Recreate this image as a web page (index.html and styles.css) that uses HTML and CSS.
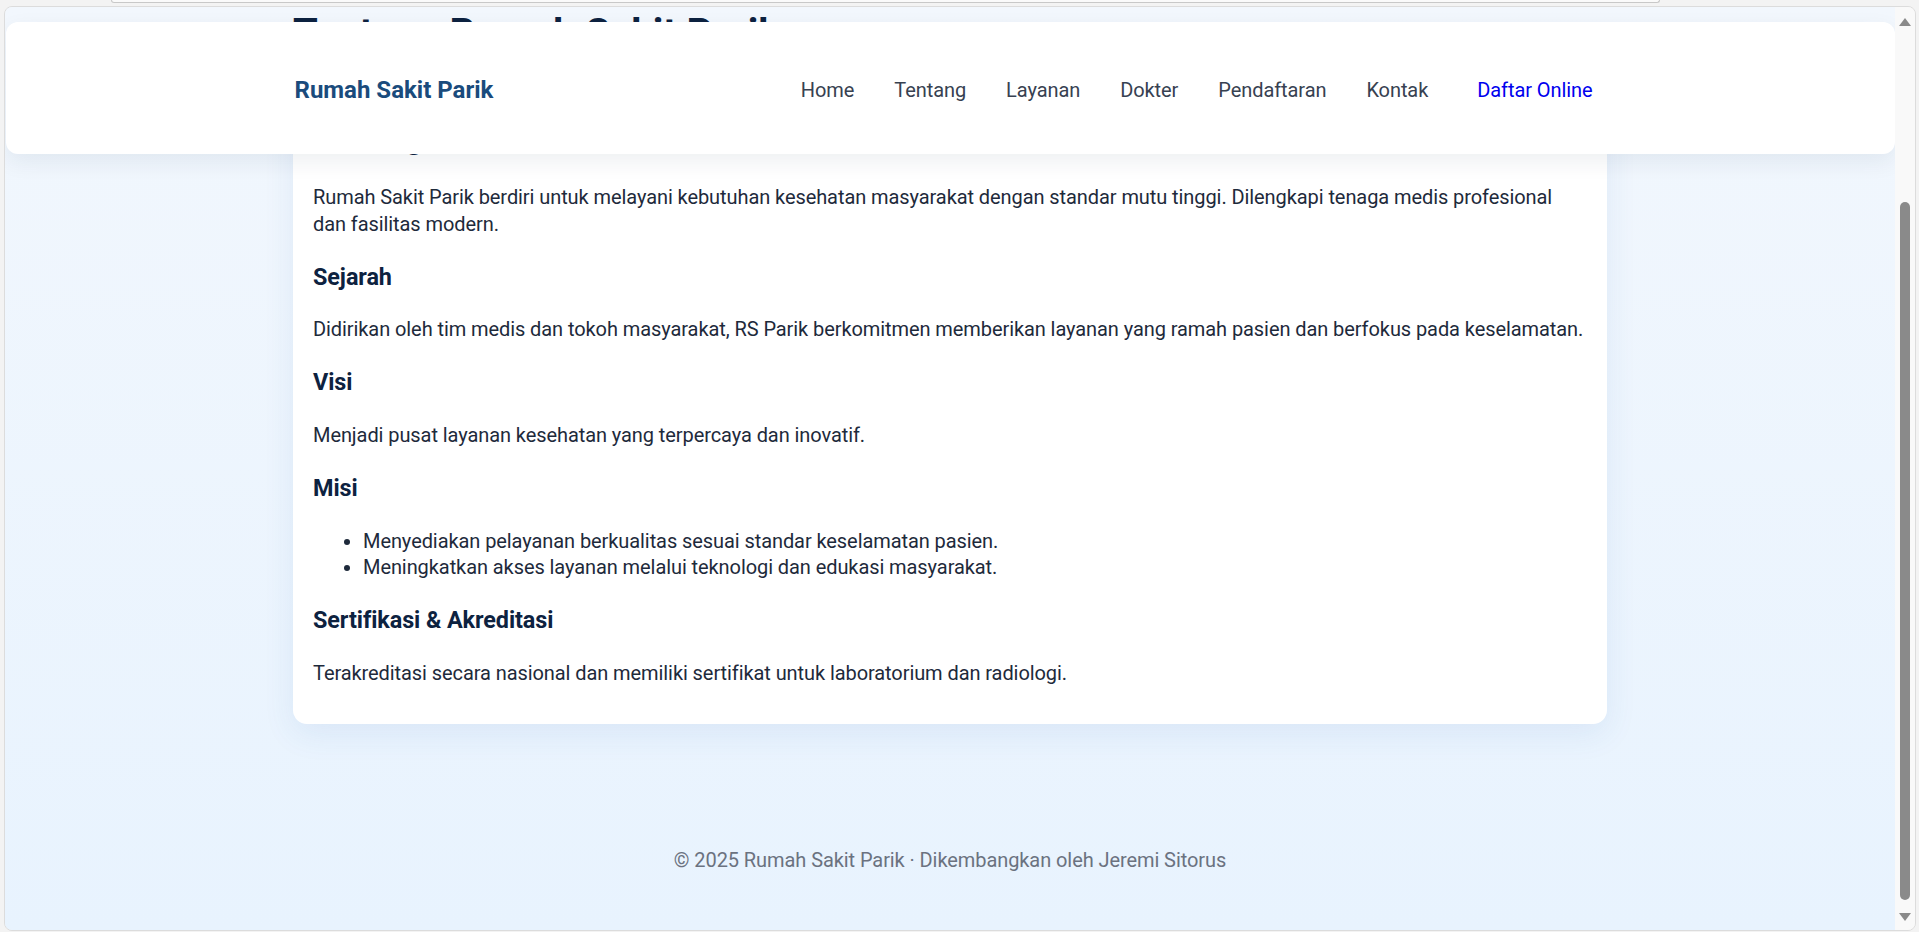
FILE: index.html
```html
<!DOCTYPE html>
<html lang="id">
<head>
<meta charset="utf-8">
<title>Tentang Rumah Sakit Parik</title>
<link rel="stylesheet" href="styles.css">
</head>
<body>
  <div class="chrome-strip"></div>
  <div class="window">
    <div class="viewport">
      <header class="site-header">
        <div class="header-inner">
          <a class="logo" href="#">Rumah Sakit Parik</a>
          <nav class="nav">
            <a href="#">Home</a>
            <a href="#">Tentang</a>
            <a href="#">Layanan</a>
            <a href="#">Dokter</a>
            <a href="#">Pendaftaran</a>
            <a href="#">Kontak</a>
            <a class="cta" href="#">Daftar Online</a>
          </nav>
        </div>
      </header>
      <main class="page">
        <h1 class="page-title">Tentang Rumah Sakit Parik</h1>
        <section class="card">
          <h2>Tentang Kami</h2>
          <p>Rumah Sakit Parik berdiri untuk melayani kebutuhan kesehatan masyarakat dengan standar mutu tinggi. Dilengkapi tenaga medis profesional dan fasilitas modern.</p>
          <h3>Sejarah</h3>
          <p>Didirikan oleh tim medis dan tokoh masyarakat, RS Parik berkomitmen memberikan layanan yang ramah pasien dan berfokus pada keselamatan.</p>
          <h3>Visi</h3>
          <p>Menjadi pusat layanan kesehatan yang terpercaya dan inovatif.</p>
          <h3>Misi</h3>
          <ul>
            <li>Menyediakan pelayanan berkualitas sesuai standar keselamatan pasien.</li>
            <li>Meningkatkan akses layanan melalui teknologi dan edukasi masyarakat.</li>
          </ul>
          <h3>Sertifikasi &amp; Akreditasi</h3>
          <p>Terakreditasi secara nasional dan memiliki sertifikat untuk laboratorium dan radiologi.</p>
        </section>
      </main>
      <footer class="site-footer">© 2025 Rumah Sakit Parik · Dikembangkan oleh Jeremi Sitorus</footer>
    </div>
    <div class="scrollbar">
      <span class="arrow arrow-up"></span>
      <span class="thumb"></span>
      <span class="arrow arrow-down"></span>
    </div>
  </div>
</body>
</html>
```

FILE: styles.css
```css
* { box-sizing: border-box; }

html, body {
  margin: 0;
  height: 932px;
  overflow: hidden;
}

body {
  background: #f3f3f3;
  font-family: Roboto, "Liberation Sans", Arial, sans-serif;
  font-size: 20px;
  letter-spacing: -0.08px;
  color: #1e2a3b;
}

.chrome-strip {
  height: 3px;
  width: 1549px;
  margin-left: 111px;
  background: #fafafa;
  border: 1px solid #c8c8c8;
  border-top: none;
  border-radius: 0 0 6px 6px;
}

.window {
  margin: 3px 3px 0 4px;
  height: 925px;
  border: 1px solid #dcdcdc;
  border-radius: 8px;
  overflow: hidden;
  display: flex;
}

.viewport {
  flex: 1;
  position: relative;
  overflow: hidden;
  background: linear-gradient(180deg, #f2f7fd 0%, #e8f3fe 100%);
  display: flex;
  flex-direction: column;
}

/* header overlays the scrolled content */
.site-header {
  position: absolute;
  top: 15px;
  left: 1px;
  right: 0;
  height: 132px;
  background: #ffffff;
  border-radius: 12px;
  box-shadow: 0 8px 22px rgba(20, 40, 70, 0.07);
  z-index: 2;
}

.header-inner {
  width: 1314px;
  height: 100%;
  margin: 0 auto;
  padding-top: 3px;
  display: flex;
  align-items: center;
  justify-content: space-between;
}

.logo {
  margin-left: 1px;
  font-size: 24px;
  font-weight: 700;
  letter-spacing: 0;
  color: #1a4b7c;
  text-decoration: none;
}

.nav {
  display: flex;
  align-items: center;
  gap: 40px;
}

.nav a {
  font-size: 20px;
  color: #374151;
  text-decoration: none;
}

.nav a.cta {
  color: #0000ee;
  padding: 0 15px 0 9px;
}

.page {
  width: 1314px;
  margin: 0 auto;
  padding-bottom: 75px;
}

.page-title {
  margin: 0 0 39px;
  font-size: 40px;
  line-height: 53px;
  font-weight: 700;
  color: #0d2240;
}

.card {
  background: #ffffff;
  border-radius: 14px;
  padding: 20px 20px 18px;
  box-shadow: 0 10px 32px rgba(40, 100, 180, 0.09);
}

.card h2 {
  margin: 0 0 25px;
  font-size: 30px;
  line-height: 40px;
  font-weight: 700;
  color: #0d2240;
}

.card h3 {
  margin: 24.6px 0 23.4px;
  font-size: 23.4px;
  line-height: 31.1px;
  font-weight: 700;
  color: #0d2240;
}

.card p {
  margin: 20px 0;
  line-height: 26.6px;
}

.card ul {
  margin: 20px 0;
  padding-left: 50px;
  line-height: 26.6px;
}

.site-footer {
  padding: 48px 0;
  text-align: center;
  font-size: 20px;
  line-height: 26.6px;
  color: #6b7280;
}

.scrollbar {
  width: 20px;
  background: #f9f9f9;
  display: flex;
  flex-direction: column;
  align-items: center;
  padding: 11px 0 9px;
}

.arrow {
  width: 0;
  height: 0;
  border-left: 6px solid transparent;
  border-right: 6px solid transparent;
}

.arrow-up {
  border-bottom: 8px solid #8a8a8a;
}

.arrow-down {
  border-top: 8px solid #8a8a8a;
}

.thumb {
  width: 10px;
  height: 698px;
  margin: 176px 0 auto;
  background: #8a8a8a;
  border-radius: 5px;
}
```
